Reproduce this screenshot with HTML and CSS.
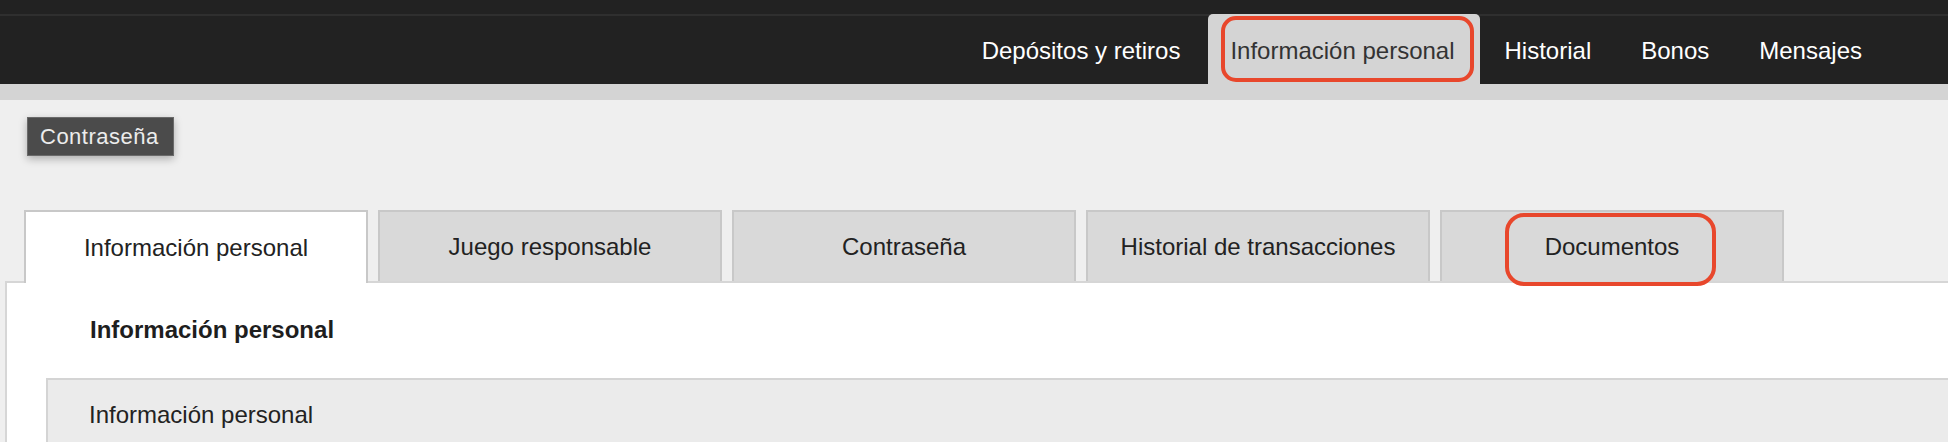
FILE: index.html
```html
<!DOCTYPE html>
<html lang="es">
<head>
<meta charset="utf-8">
<title>Información personal</title>
<link rel="stylesheet" href="styles.css">
</head>
<body>
<header class="header">
  <div class="header-top"></div>
  <nav class="nav">
    <a class="nav-item nav-item--first">Depósitos y retiros</a>
    <a class="nav-item nav-item--active">Información personal<span class="mark mark--nav"></span></a>
    <a class="nav-item">Historial</a>
    <a class="nav-item">Bonos</a>
    <a class="nav-item">Mensajes</a>
  </nav>
</header>
<div class="strip"></div>
<main class="main">
  <button class="pill-btn">Contraseña</button>
  <div class="tabs">
    <div class="tab tab--active">Información personal</div>
    <div class="tab">Juego responsable</div>
    <div class="tab">Contraseña</div>
    <div class="tab">Historial de transacciones</div>
    <div class="tab">Documentos<span class="mark mark--tab"></span></div>
  </div>
  <section class="panel">
    <h2 class="panel-title">Información personal</h2>
    <div class="section-box">
      <div class="section-label">Información personal</div>
    </div>
  </section>
</main>
</body>
</html>
```

FILE: styles.css
```css
* { box-sizing: border-box; }

html, body {
  margin: 0;
  padding: 0;
  background: #efefef;
  font-family: "Liberation Sans", Arial, sans-serif;
  overflow: hidden;
}

.header {
  background: #222222;
  height: 84px;
}

.header-top {
  height: 14px;
}

.nav {
  height: 70px;
  border-top: 2px solid #2f2f2f;
  display: flex;
  justify-content: flex-end;
  align-items: stretch;
  padding-right: 61px;
}

.nav-item {
  position: relative;
  display: flex;
  align-items: center;
  padding: 3px 25px 0;
  margin-top: -2px;
  font-size: 24px;
  color: #ffffff;
  white-space: nowrap;
  border-radius: 5px 5px 0 0;
}

.nav-item--first {
  padding-right: 28px;
}

.nav-item--active {
  background: #d4d4d4;
  color: #333333;
  padding-left: 22px;
}

.strip {
  height: 16px;
  background: #d4d4d4;
}

.main {
  display: flex;
  flex-direction: column;
  align-items: flex-start;
}

.pill-btn {
  margin: 17px 0 0 27px;
  width: 147px;
  height: 39px;
  padding: 0 0 0 12px;
  text-align: left;
  background: #4b4b4b;
  border: 1px solid #6a6a6a;
  color: #ececec;
  font-family: "Liberation Sans", Arial, sans-serif;
  font-size: 22px;
  letter-spacing: 0.5px;
  line-height: 37px;
  box-shadow: 0 3px 8px rgba(0, 0, 0, 0.28);
}

.tabs {
  margin: 54px 0 0 24px;
  display: flex;
  align-items: flex-start;
  gap: 10px;
  position: relative;
  z-index: 1;
  height: 71px;
}

.tab {
  position: relative;
  width: 344px;
  height: 71px;
  display: flex;
  align-items: center;
  justify-content: center;
  background: #d9d9d9;
  border: 2px solid #c8c8c8;
  border-bottom: none;
  font-size: 24px;
  color: #222222;
  white-space: nowrap;
}

.tab--active {
  background: #ffffff;
  height: 73px;
}

.mark {
  position: absolute;
  border: 4px solid #e8472c;
  pointer-events: none;
  z-index: 3;
}

.mark--nav {
  left: 13px;
  top: 2px;
  width: 253px;
  height: 66px;
  border-radius: 15px;
}

.mark--tab {
  left: 63px;
  top: 1px;
  width: 211px;
  height: 73px;
  border-radius: 19px;
}

.panel {
  align-self: stretch;
  margin-left: 5px;
  margin-right: -20px;
  background: #ffffff;
  border-top: 2px solid #d6d6d6;
  border-left: 2px solid #d6d6d6;
  padding-top: 35px;
  height: 161px;
}

.panel-title {
  margin: 0 0 0 83px;
  font-size: 24px;
  line-height: 24px;
  font-weight: bold;
  color: #1e1e1e;
}

.section-box {
  margin: 36px 0 0 39px;
  background: #ebebeb;
  border-top: 2px solid #d4d4d4;
  border-left: 2px solid #d4d4d4;
  padding: 23px 0 0 41px;
  height: 64px;
}

.section-label {
  font-size: 24px;
  line-height: 24px;
  color: #222222;
}
```
